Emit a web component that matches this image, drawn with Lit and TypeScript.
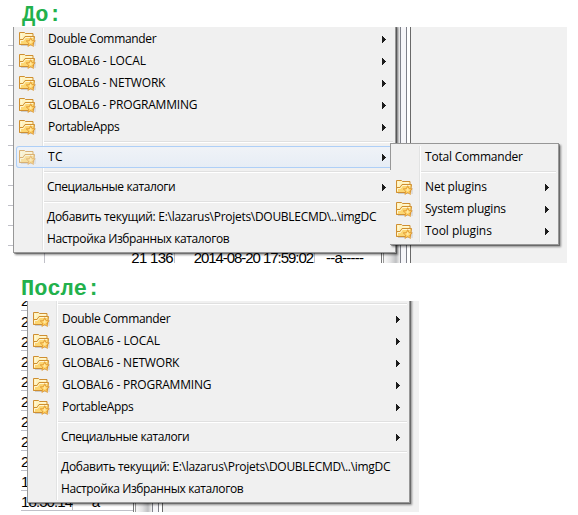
import { LitElement, html, svg, css } from "lit";
import { customElement, property } from "lit/decorators.js";

interface Item {
  label?: string;
  width?: number;
  icon?: boolean;
  arrow?: boolean;
  sep?: boolean;
  hot?: boolean;
  action?: boolean;
}

const folder = (label: string, width: number): Item => ({ label, width, icon: true, arrow: true });
const dirs: Item[] = [
  folder("Double Commander", 108),
  folder("GLOBAL6 - LOCAL", 97.5),
  folder("GLOBAL6 - NETWORK", 117),
  folder("GLOBAL6 - PROGRAMMING", 149),
  folder("PortableApps", 71),
];
const tail: Item[] = [
  { sep: true },
  { label: "Специальные каталоги", width: 128, arrow: true, action: true },
  { sep: true },
  { label: "Добавить текущий: E:\\lazarus\\Projets\\DOUBLECMD\\..\\imgDC", width: 329, action: true },
  { label: "Настройка Избранных каталогов", width: 182, action: true },
];
const before: Item[] = [...dirs, { sep: true }, { ...folder("TC", 14.5), hot: true }, ...tail];
const after: Item[] = [{ sep: true }, ...dirs, ...tail];
const sub: Item[] = [
  { label: "Total Commander", width: 97.5 },
  { sep: true },
  folder("Net plugins", 61.5),
  folder("System plugins", 80.5),
  folder("Tool plugins", 66.5),
];

const folderIcon = svg`<svg class="folder" width="17" height="17" viewBox="0 0 17 17">
  <path d="M2 14.5h12M16 9v6" stroke="#a8a8a8" stroke-opacity=".5" fill="none"/>
  <path d="M.5 13.5v-12h5l1 1h7.500v4" fill="#fff3bf" stroke="#cf8f31"/>
  <path d="M.5 13.5V8.500h3.500l2-3h9.500l-1 8z" fill="#fcd672" stroke="#cf8f31"/>
  <path d="M1.5 12.500v-3h3l2-3h7.500M2.500 2.500v4M7.500 3.500h5" fill="none" stroke="#fff7d4"/>
  <path d="M11.700 6.700l1.300 2.900 3.200.3-2.400 2.200.7 3.300-2.800-1.700-2.800 1.700.7-3.300-2.400-2.200 3.200-.3z" fill="#ffcf5c" stroke="#dd9634" stroke-width=".8"/>
  <path d="M11.700 9v3.500M9.800 11h3.800" stroke="#ffeaa8" stroke-width="1.100"/>
</svg>`;
const arrowIcon = svg`<svg class="arrow" width="4" height="7" viewBox="0 0 4 7" shape-rendering="crispEdges"><path d="M0 0h1v1h1v1h1v1h1v1H3v1H2v1H1v1H0z" fill="#1c1c1c"/></svg>`;

@customElement("popup-menu")
export class PopupMenu extends LitElement {
  @property({ attribute: false }) items: Item[] = [];

  static styles = css`
    :host { display: block; box-sizing: border-box; background: #f0f0f0; border: 1px solid #979797;
      padding: 2px; font: 12px/22px "Open Sans", "Noto Sans", sans-serif; color: #000; }
    .list { position: relative; }
    .list::before { content: ""; position: absolute; left: 26px; top: 0; bottom: 0; width: 1px;
      background: #e2e3e3; border-right: 1px solid #fff; }
    .row { position: relative; box-sizing: border-box; height: 22px; display: grid;
      grid-template-columns: 32px 1fr 4px; align-items: center; padding-right: 7px; }
    .action { grid-template-columns: 31px 1fr 4px; }
    .hot { background: linear-gradient(rgba(240, 243, 248, .9), rgba(228, 236, 246, .85)); box-shadow: inset 0 0 0 1px #aecff7; border-radius: 3px; }
    .hot .folder { opacity: .65; }
    .sep { height: 8px; display: flex; align-items: center; padding-left: 28px; }
    .line { flex: 1; height: 1px; background: #e0e0e0; border-bottom: 1px solid #fff; position: relative; }
    .folder { display: block; margin-left: 3px; }
    .arrow { display: block; grid-column: 3; }
    .label { white-space: pre; justify-self: start; grid-column: 2; }
  `;

  updated() {
    this.renderRoot.querySelectorAll<HTMLElement>(".label").forEach((el) => {
      el.style.letterSpacing = "0px";
      const goal = Number(el.dataset.width);
      const n = el.textContent!.length;
      el.style.letterSpacing = (goal + 0.3 - el.getBoundingClientRect().width) / n + "px";
    });
  }

  render() {
    return html`<div class="list">${this.items.map((i) => i.sep
      ? html`<div class="sep"><div class="line"></div></div>`
      : html`<div class="row ${i.hot ? "hot" : ""} ${i.action ? "action" : ""}">
          ${i.icon ? folderIcon : ""}<span class="label" data-width=${i.width}>${i.label}</span>${i.arrow ? arrowIcon : ""}
        </div>`)}</div>`;
  }
}

@customElement("app-root")
export class AppRoot extends LitElement {
  static styles = css`
    :host { display: flex; flex-direction: column; width: 578px; height: 515px; background: #fff; overflow: hidden; }
    .title { box-sizing: border-box; margin: 0; padding-left: 22px; color: #22b14c;
      font: bold 22px/31px "Liberation Mono", monospace; height: 27px; }
    .second { height: 38px; line-height: 29px; padding: 12px 0 0 21px; }
    .scene { position: relative; overflow: hidden; font: 15px/20px "Liberation Sans", sans-serif; }
    .one { margin-left: 8px; width: 559px; height: 236px; }
    .two { margin-left: 21px; width: 398px; height: 211px; }
    .back { display: flex; height: 100%; }
    .sheet { flex: none; background: #fff; overflow: hidden; }
    .one .sheet { width: 373px; }
    .two .sheet { width: 112px; }
    .bars { flex: none; box-sizing: border-box; width: 30px; display: flex; border-left: 1px solid #777; }
    .scroll { box-sizing: border-box; width: 17px; margin-left: 1px; border-left: 1px solid #999;
      background: linear-gradient(90deg, #f4f4f4 10%, #e2e2e3 40%, #bfc0c2 75%, #f2f2f2); }
    .gap { box-sizing: border-box; width: 7px; border: solid #7f818a; border-width: 0 1px; background: #f6f6f9; }
    .edge { flex: 1; border-right: 1px solid #696969; background: #fff; }
    .panel { flex: 1; background: #f1f1f1; }
    .line { box-sizing: border-box; height: 20px; display: flex; border-bottom: 1px solid #c0c0c8; white-space: pre; }
    .one .line:first-child { height: 19px; }
    .one .line:last-child { border-bottom: 0; }
    .two .line { line-height: 22px; }
    .two .line:first-child { height: 10px; line-height: 0; }
    .cell { box-sizing: border-box; flex: none; border-right: 1px solid #c0c0c8; }
    .name { width: 37px; }
    .size { width: 130px; text-align: right; padding-right: 1px; letter-spacing: -.7px; }
    .date { width: 140px; text-align: right; padding-right: 1px; letter-spacing: -1.05px; }
    .attr { flex: 1; padding-left: 11px; letter-spacing: -.75px; }
    .time { width: 52px; letter-spacing: -.9px; }
    .mark { flex: 1; text-align: center; padding-right: 14px; }
    .drop { line-height: 23px; }
    .menu { position: absolute; box-shadow: 1px 1px 0 rgba(0, 0, 0, .28), 2px 2px 2px rgba(0, 0, 0, .42); }
    .m1 { left: 5px; top: -2px; width: 383px; }
    .m2 { left: 6px; top: -4px; width: 383px; }
    .m3 { left: 382px; top: 116px; width: 169px; border-left: 0; padding-left: 3px; }
    .m3::before { content: ""; position: absolute; left: 0; top: 0; width: 1px; height: 26px; background: #979797; }
  `;

  render() {
    const bars = html`<div class="bars"><div class="scroll"></div><div class="gap"></div><div class="edge"></div></div><div class="panel"></div>`;
    return html`
      <h1 class="title">До:</h1>
      <div class="scene one">
        <div class="back">
          <div class="sheet">
            ${Array.from({ length: 11 }, () => html`<div class="line"></div>`)}
            <div class="line drop"><span class="cell name"></span><span class="cell size">21 136</span><span class="cell date">2014-08-20 17:59:02</span><span class="attr">--a-----</span></div>
          </div>
          ${bars}
        </div>
        <popup-menu class="menu m1" .items=${before}></popup-menu>
        <popup-menu class="menu m3" .items=${sub}></popup-menu>
      </div>
      <h1 class="title second">После:</h1>
      <div class="scene two">
        <div class="back">
          <div class="sheet">
            ${[..."222222222" + "1"].map((d) => html`<div class="line">${d}</div>`)}
            <div class="line"><span class="cell time">18:30:14</span><span class="mark">a</span></div>
            <div class="line"></div>
          </div>
          ${bars}
        </div>
        <popup-menu class="menu m2" .items=${after}></popup-menu>
      </div>`;
  }
}
